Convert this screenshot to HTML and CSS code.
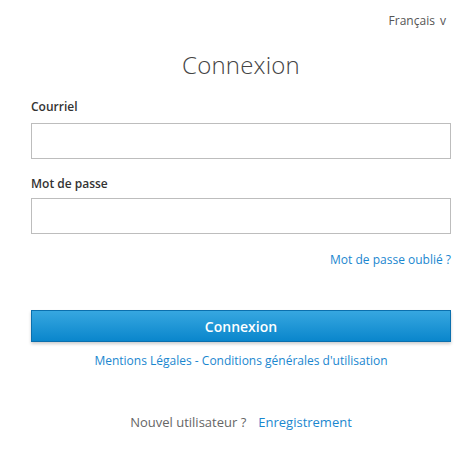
FILE: index.html
```html
<!DOCTYPE html>
<html lang="fr">
<head>
<meta charset="utf-8">
<link rel="stylesheet" href="styles.css">
</head>
<body>
<div class="page">
  <div class="lang">Français <span class="caret">v</span></div>
  <h1 class="title">Connexion</h1>
  <form class="form">
    <label class="label">Courriel</label>
    <input class="field" type="text">
    <label class="label label-pw">Mot de passe</label>
    <input class="field" type="password">
    <div class="forgot-row"><a class="link">Mot de passe oublié ?</a></div>
    <button class="btn" type="button">Connexion</button>
    <div class="legal"><a class="link">Mentions Légales</a> - <a class="link">Conditions générales d'utilisation</a></div>
    <div class="register"><span class="muted">Nouvel utilisateur ?</span><a class="link reg">Enregistrement</a></div>
  </form>
</div>
</body>
</html>
```
FILE: styles.css
```css
* { box-sizing: border-box; }
html, body { margin: 0; padding: 0; background: #fff; }
body { font-family: "Open Sans", "Noto Sans", sans-serif; color: #333; }
.page { padding: 0 25px 0 31px; width: 476px; }
.lang { text-align: right; font-size: 12px; color: #555; padding-top: 12px; padding-right: 5px; line-height: 17px; }
.caret { margin-left: 2px; }
.title { margin: 21px 0 0; font-weight: 300; font-size: 24px; line-height: 30px; text-align: center; color: #444; letter-spacing: 0.2px; }
.form { display: flex; flex-direction: column; margin-top: 18px; }
.label { font-size: 12px; font-weight: 600; color: #333; line-height: 17px; margin-bottom: 8px; }
.label-pw { margin-top: 16px; margin-bottom: 6px; }
.field { width: 420px; height: 36px; border: 1px solid #bdbdbd; border-radius: 0; background: #fff; }
.forgot-row { text-align: right; margin-top: 17px; font-size: 12px; line-height: 17px; }
.link { color: #1a87cf; text-decoration: none; }
.btn { margin-top: 42px; width: 420px; height: 32px; border: 1px solid #0b6fad; background: linear-gradient(#37a7e0, #0a86cc); color: #fff; font-family: inherit; font-weight: 600; font-size: 14px; box-shadow: 0 2px 3px rgba(0,0,0,0.2); padding: 0; }
.legal { text-align: center; margin-top: 10px; font-size: 12px; line-height: 17px; color: #1a87cf; }
.register { text-align: center; margin-top: 44px; font-size: 13px; line-height: 18px; }
.muted { color: #666; }
.reg { margin-left: 12px; }
```
